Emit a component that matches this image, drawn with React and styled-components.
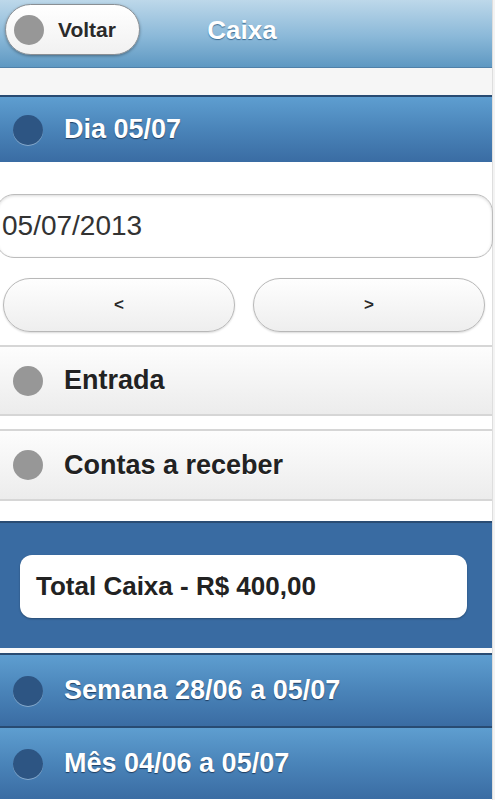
import React from 'react'
import styled, { createGlobalStyle } from 'styled-components'

const GlobalStyle = createGlobalStyle`
  html, body {
    margin: 0;
    padding: 0;
    background: #f3f3f3;
    overflow: hidden;
  }
  body {
    font-family: "Liberation Sans", Arial, sans-serif;
  }
`

const Page = styled.div`
  width: 492px;
  height: 800px;
  background: #fff;
  display: flex;
  flex-direction: column;
  border-right: 1px solid #dedede;
`

const Header = styled.header`
  height: 67px;
  flex-shrink: 0;
  display: grid;
  grid-template-columns: 1fr auto 1fr;
  align-items: center;
  padding: 0 5px;
  background: linear-gradient(#bdd8ea, #8ab8d8 55%, #5e98c2);
  border-bottom: 1px solid #4f80a8;
`

const BackButton = styled.button`
  justify-self: start;
  width: 135px;
  height: 51px;
  margin-top: -8px;
  display: flex;
  align-items: center;
  gap: 14px;
  padding: 0 0 0 8px;
  border: 1px solid #8a8f94;
  border-radius: 26px;
  background: linear-gradient(#ffffff, #f1f1f1);
  box-shadow: 0 1px 3px rgba(0, 0, 0, 0.35);
  font-family: inherit;
  font-size: 21px;
  font-weight: bold;
  color: #2a2a2a;
  text-shadow: 0 1px 0 #fff;
`

const Title = styled.h1`
  margin: -6px 8px 0 0;
  font-size: 26px;
  font-weight: bold;
  color: #fff;
  text-shadow: 0 1px 1px #3c6a90;
`

const Dot = styled.span`
  width: ${(p) => p.$size || 30}px;
  height: ${(p) => p.$size || 30}px;
  border-radius: 50%;
  flex-shrink: 0;
  background: ${(p) => (p.$dark ? '#2d5583' : '#979797')};
  box-shadow: ${(p) =>
    p.$dark ? '0 1px 0 rgba(255, 255, 255, 0.35)' : 'none'};
`

const Strip = styled.div`
  height: 27px;
  flex-shrink: 0;
  background: #f6f6f6;
`

const Bar = styled.div`
  height: ${(p) => p.$h}px;
  flex-shrink: 0;
  display: flex;
  align-items: center;
  gap: 21px;
  padding-left: 13px;
  background: linear-gradient(#5e9ed0, #4a84b9 50%, #3a6ca3);
  border-top: 2px solid #284b72;
  font-size: 27px;
  font-weight: bold;
  color: #fff;
  text-shadow: 0 1px 1px #1f3d60;
`

const Content = styled.div`
  padding: 32px 0 0;
  display: flex;
  flex-direction: column;
`

const DateInput = styled.input`
  height: 64px;
  margin: 0 -1px 0 -4px;
  padding: 0 0 0 5px;
  box-sizing: border-box;
  border: 1px solid #bcbcbc;
  border-radius: 18px;
  background: #fff;
  box-shadow: inset 0 1px 3px rgba(0, 0, 0, 0.15);
  font-family: inherit;
  font-size: 28px;
  color: #333;
  outline: none;
`

const NavRow = styled.div`
  display: grid;
  grid-template-columns: 1fr 1fr;
  gap: 18px;
  padding: 20px 7px 0 3px;
`

const NavButton = styled.button`
  height: 54px;
  border: 1px solid #b8b8b8;
  border-radius: 27px;
  background: linear-gradient(#fefefe, #eeeeee);
  box-shadow: 0 1px 2px rgba(0, 0, 0, 0.15);
  font-family: inherit;
  font-size: 17px;
  font-weight: bold;
  color: #2a2a2a;
`

const List = styled.ul`
  list-style: none;
  margin: 13px 0 0;
  padding: 0;
  display: flex;
  flex-direction: column;
  gap: 13px;
`

const Row = styled.li`
  height: ${(p) => p.$h}px;
  box-sizing: border-box;
  display: flex;
  align-items: center;
  gap: 21px;
  padding-left: 13px;
  background: linear-gradient(#fdfdfd, #ececec);
  border-top: 2px solid #d6d6d6;
  border-bottom: 2px solid #d6d6d6;
  font-size: 27px;
  font-weight: bold;
  color: #222;
  text-shadow: 0 1px 0 #fff;
`

const TotalPanel = styled.div`
  height: 132px;
  flex-shrink: 0;
  box-sizing: border-box;
  margin-top: 20px;
  padding: 32px 25px 0 20px;
  background: #396ba2;
  border-top: 2px solid #2a4c73;
  border-bottom: 5px solid #fafafa;
`

const TotalBox = styled.div`
  height: 63px;
  display: flex;
  align-items: center;
  padding-left: 16px;
  border-radius: 12px;
  background: #fff;
  box-shadow: 0 1px 2px rgba(0, 0, 0, 0.3);
  font-size: 26px;
  font-weight: bold;
  color: #222;
`

export default function App() {
  return (
    <>
      <GlobalStyle />
      <Page>
        <Header>
          <BackButton>
            <Dot />
            Voltar
          </BackButton>
          <Title>Caixa</Title>
          <span />
        </Header>
        <Strip />
        <Bar $h={65}>
          <Dot $dark />
          Dia 05/07
        </Bar>
        <Content>
          <DateInput defaultValue="05/07/2013" />
          <NavRow>
            <NavButton>&lt;</NavButton>
            <NavButton>&gt;</NavButton>
          </NavRow>
        </Content>
        <List>
          <Row $h={71}>
            <Dot />
            Entrada
          </Row>
          <Row $h={72}>
            <Dot />
            Contas a receber
          </Row>
        </List>
        <TotalPanel>
          <TotalBox>Total Caixa - R$ 400,00</TotalBox>
        </TotalPanel>
        <Bar $h={71}>
          <Dot $dark />
          Semana 28/06 a 05/07
        </Bar>
        <Bar $h={71}>
          <Dot $dark />
          Mês 04/06 a 05/07
        </Bar>
      </Page>
    </>
  )
}
